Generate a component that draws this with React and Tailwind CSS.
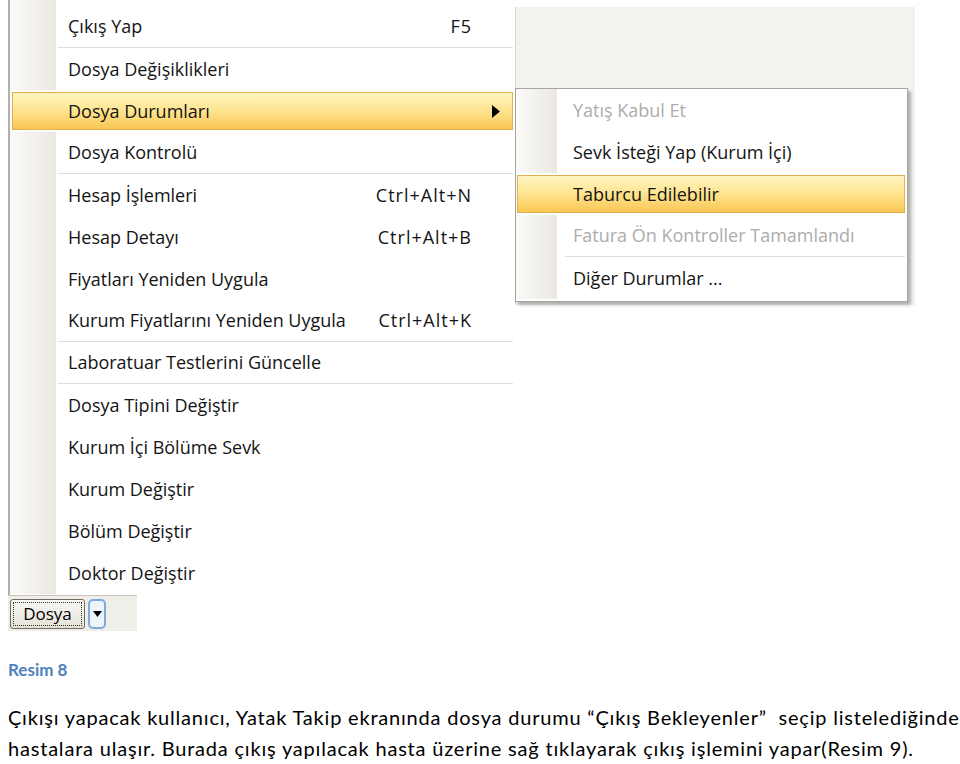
import React from 'react';

const mainItems = [
  { label: 'Çıkış Yap', key: 'F5', sep: true },
  { label: 'Dosya Değişiklikleri' },
  { label: 'Dosya Durumları', active: true, sub: true },
  { label: 'Dosya Kontrolü', sep: true },
  { label: 'Hesap İşlemleri', key: 'Ctrl+Alt+N' },
  { label: 'Hesap Detayı', key: 'Ctrl+Alt+B' },
  { label: 'Fiyatları Yeniden Uygula' },
  { label: 'Kurum Fiyatlarını Yeniden Uygula', key: 'Ctrl+Alt+K', sep: true },
  { label: 'Laboratuar Testlerini Güncelle', sep: true },
  { label: 'Dosya Tipini Değiştir' },
  { label: 'Kurum İçi Bölüme Sevk' },
  { label: 'Kurum Değiştir' },
  { label: 'Bölüm Değiştir' },
  { label: 'Doktor Değiştir' },
];

const subItems = [
  { label: 'Yatış Kabul Et', disabled: true },
  { label: 'Sevk İsteği Yap (Kurum İçi)' },
  { label: 'Taburcu Edilebilir', active: true },
  { label: 'Fatura Ön Kontroller Tamamlandı', disabled: true, sep: true },
  { label: 'Diğer Durumlar ...' },
];

const menuFont = { fontFamily: '"Open Sans", "Noto Sans", sans-serif' };

function MainRow({ item }) {
  if (item.active) {
    return (
      <div className="h-[42px] p-[2px]">
        <div className="h-full flex items-center justify-between pl-[55px] pr-[12px] border border-[#dfb052] bg-linear-to-b from-[#fff4c0] via-[#fee48f] to-[#f9c650]">
          <span>{item.label}</span>
          <svg width="8" height="13" viewBox="0 0 8 13"><path d="M0 0 L8 6.5 L0 13 Z" fill="#000" /></svg>
        </div>
      </div>
    );
  }
  return (
    <div className="h-[42px] flex">
      <div className="w-[46px] bg-linear-to-r from-[#fbfaf8] to-[#ebe8e1]" />
      <div className={`flex-1 ml-[2px] mr-[2px] flex items-center justify-between pl-[10px] pr-[41px] ${item.sep ? 'border-b border-[#e2dfd9]' : ''}`}>
        <span>{item.label}</span>
        {item.key && <span className="tracking-[1px]">{item.key}</span>}
      </div>
    </div>
  );
}

function SubRow({ item }) {
  if (item.active) {
    return (
      <div className="h-[42px] py-[2px] pl-[1px] pr-[2px]">
        <div className="h-full flex items-center pl-[55px] border border-[#dfb052] bg-linear-to-b from-[#fff4c0] via-[#fee48f] to-[#f9c650]">
          <span>{item.label}</span>
        </div>
      </div>
    );
  }
  return (
    <div className="h-[42px] flex">
      <div className="w-[41px] bg-linear-to-r from-[#fbfaf8] to-[#ebe8e1]" />
      <div className={`flex-1 ml-[8px] mr-[2px] flex items-center pl-[8px] ${item.sep ? 'border-b border-[#e2dfd9]' : ''} ${item.disabled ? 'text-[#acacac]' : ''}`}>
        <span>{item.label}</span>
      </div>
    </div>
  );
}

export default function App() {
  return (
    <div className="w-[960px] h-[764px] bg-white overflow-hidden">
      {/* captured window */}
      <div className="relative text-[18px] text-[#141414]" style={menuFont}>
        <div className="flex">
          <div className="w-2" />
          <div className="w-[507px] border-l-2 border-[#b4b0a8] bg-white">
            <div className="h-[6px] flex">
              <div className="w-[46px] bg-linear-to-r from-[#fbfaf8] to-[#ebe8e1]" />
            </div>
            {mainItems.map((it) => (
              <MainRow key={it.label} item={it} />
            ))}
            <div className="h-[1px]" />
          </div>
          <div className="w-[400px] mt-[7px] h-[298px] bg-[#f4f2ee] border-l border-[#d8d5cf]" />
        </div>

        {/* submenu */}
        <div className="absolute left-[515px] top-[88px] w-[393px] h-[214px] bg-white border border-[#a5a5a5] shadow-[3px_3px_3px_rgba(0,0,0,0.28)]">
          {subItems.map((it) => (
            <SubRow key={it.label} item={it} />
          ))}
        </div>

        {/* toolbar under menu */}
        <div className="ml-2 w-[129px] h-[36px] bg-[#f0eee9] border-t border-[#c9c5bd] flex items-center gap-[3px] pl-[2px]">
          <div className="w-[75px] h-[30px] rounded-[3px] border border-[#6f6b64] bg-linear-to-b from-[#f9f8f4] to-[#e5e1d6] p-[2px]">
            <div className="h-full border border-dotted border-[#333] flex items-center justify-center text-[17px] text-black">Dosya</div>
          </div>
          <div className="w-[18px] h-[30px] rounded-[5px] border-2 border-[#7fa9dc] bg-[#eef4fb] flex items-center justify-center">
            <svg width="9" height="6" viewBox="0 0 9 6"><path d="M0 0 H9 L4.5 6 Z" fill="#000" /></svg>
          </div>
        </div>
      </div>

      {/* caption and text */}
      <div className="pl-2" style={{ fontFamily: 'Lato, "Open Sans", sans-serif' }}>
        <div className="mt-[28px] text-[17px] font-bold text-[#4f81bd] leading-[22px]">Resim 8</div>
        <div className="mt-[21px] text-[20px] tracking-[0.8px] text-black leading-[31px] whitespace-nowrap">
          <div>Çıkışı yapacak kullanıcı, Yatak Takip ekranında dosya durumu “Çıkış Bekleyenler”&nbsp; seçip listelediğinde</div>
          <div>hastalara ulaşır. Burada çıkış yapılacak hasta üzerine sağ tıklayarak çıkış işlemini yapar(Resim 9).</div>
        </div>
      </div>
    </div>
  );
}
